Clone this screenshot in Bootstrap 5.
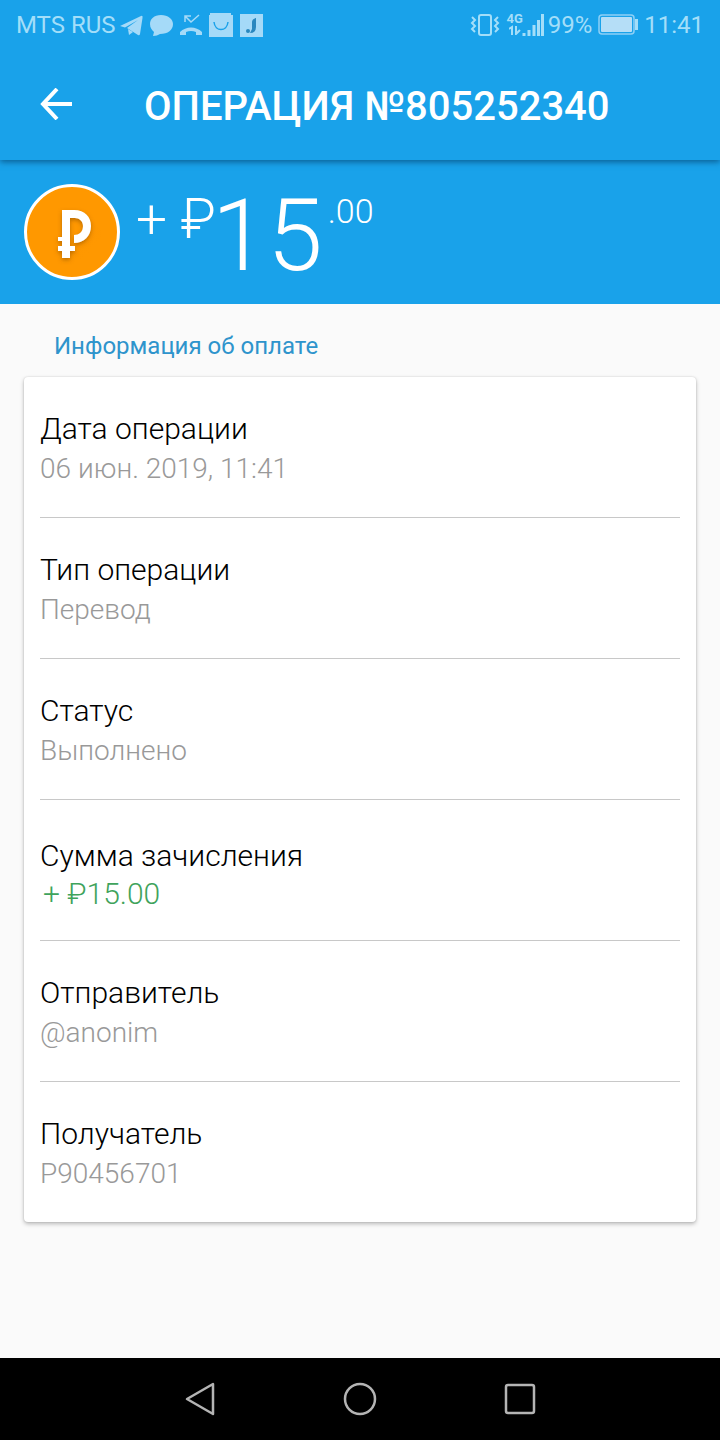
<!DOCTYPE html>
<html lang="ru">
<head>
<meta charset="utf-8">
<meta name="viewport" content="width=device-width, initial-scale=1">
<title>Операция №805252340</title>
<link href="https://cdn.jsdelivr.net/npm/bootstrap@5.3.0/dist/css/bootstrap.min.css" rel="stylesheet">
<style>
  body { font-family: Roboto, "Noto Sans", sans-serif; background: #fafafa; color: #000; }
  svg { display: block; flex: none; }
  .sky { background: #19a2ea; color: #fff; }
  .topzone { box-shadow: 0 2px 6px rgba(0, 50, 90, .6); z-index: 1; }
  .status { height: 48px; padding: 2px 16px 0; font-size: 24px; line-height: 46px; color: #a3def9; }
  .network { font-size: 13px; line-height: 13px; font-weight: 700; height: 26px; width: 14px; }
  .battery { margin: 0 6px; }
  .appbar { height: 112px; padding: 0 24px; }
  .appbar h1 { font-size: 40px; line-height: 48px; font-weight: 500; padding-top: 5px; }
  .back { width: 64px; height: 64px; margin-right: 56px; }
  .amount { height: 144px; padding: 0 24px; font-weight: 300; }
  .sign { font-size: 55px; line-height: 64px; padding-top: 27px; }
  .whole { font-size: 100px; line-height: 112px; padding-top: 20px; margin: 0 5px 0 -4px; }
  .cents { font-size: 34px; line-height: 40px; padding-top: 31px; }
  .section-title { font-size: 24px; line-height: 32px; font-weight: 400; color: #2e94cc; margin: 0; padding: 26px 30px 15px; }
  .sheet { border: 0; border-radius: 4px; box-shadow: 0 2px 4px rgba(0, 0, 0, .26), 0 0 2px rgba(0, 0, 0, .14); padding: 0 16px; }
  .entry { height: 141px; padding-top: 32px; border-bottom: 1px solid #c8c8c8; }
  .entry:last-child { border-bottom: 0; height: 140px; }
  .entry dt { font-size: 30px; line-height: 40px; font-weight: 300; }
  .entry dd { font-size: 28px; line-height: 40px; font-weight: 300; color: #999; margin: 0; }
  .entry-sum { padding-top: 36px; }
  .entry-sum dd { font-size: 30px; line-height: 36px; color: #3fa35c; padding-left: 3px; }
  .softkeys { height: 82px; background: #000; gap: 112px; }
  .softkeys .btn { width: 48px; height: 48px; }
</style>
</head>
<body class="d-flex flex-column min-vh-100">
<div class="topzone sky position-relative">
<div class="status d-flex justify-content-between align-items-center">
  <div class="d-flex align-items-center">
    <span>MTS RUS</span>
    <svg class="ms-1" width="144" height="28" viewBox="0 0 144 28" fill="#a5daf8" aria-hidden="true">
      <path d="M0 15L21 5Q23 4 22.500 7L20 23Q19.500 25 18 24L7 17L18 9L5 16.500Z"/>
      <path d="M8 18L13 21L9 24Z"/>
      <path d="M41 4C34 4 30 8 30 13C30 17 32 19 34 21L33 25C36 25 38 24 40 23C48 23 53 19 53 13C53 8 48 4 41 4Z"/>
      <path d="M65 11V5H71M65 5L71 11L79 4" fill="none" stroke="#a5daf8" stroke-width="1.500"/>
      <path d="M60 21C66 15 76 15 82 21V24H76V21Q71 19 66 21V24H60Z"/>
      <path d="M90 2H111V4H113V26H89V4H90Z"/>
      <path d="M94 11C95 21 107 21 108 11" fill="none" stroke="#19a2ea" stroke-width="1.500"/>
      <path d="M120 3H143V26H120Z"/>
      <path d="M136 7V16Q136 22 130 22L132 18V11Q132 8 136 7Z" fill="#2987bf"/>
      <circle cx="128" cy="20" r="2" fill="#2987bf"/>
    </svg>
  </div>
  <div class="d-flex align-items-center">
    <svg width="30" height="26" viewBox="0 0 30 26" fill="none" stroke="#a3def9" aria-hidden="true">
      <rect x="9" y="3" width="12" height="20" rx="2" stroke-width="2"/>
      <path d="M2 5L5 8L2 11L5 14L2 17L5 20M28 5L25 8L28 11L25 14L28 17L25 20" stroke-width="2"/>
    </svg>
    <span class="network d-flex flex-column align-items-center ms-2">
      <span>4G</span>
      <svg width="12" height="10" viewBox="0 0 12 10" fill="none" stroke="#a3def9" stroke-width="2" aria-hidden="true"><path d="M0 4L3 2V10M7 1V9L11 5"/></svg>
    </span>
    <svg width="22" height="26" viewBox="0 0 22 26" fill="none" stroke="#a3def9" stroke-width="3" aria-hidden="true"><path d="M2 24V21M7 24V18M12 24V13M16.500 24V8M20.500 24V2"/></svg>
    <span class="ms-1">99%</span>
    <svg class="battery" width="40" height="22" viewBox="0 0 40 22" aria-hidden="true">
      <rect x="1" y="1" width="35" height="19" rx="3" fill="none" stroke="#8dd0f6" stroke-width="1.500"/>
      <rect x="3" y="3" width="31" height="15" rx="1" fill="#b5def7"/>
      <path d="M38.500 5V16" stroke="#a3def9" stroke-width="3"/>
    </svg>
    <span>11:41</span>
  </div>
</div>

<header class="appbar d-flex align-items-center">
  <button class="back btn border-0 p-0 text-white d-flex align-items-center justify-content-center" type="button" aria-label="Назад">
    <svg width="32" height="32" viewBox="0 0 32 32" fill="none" stroke="#fff" stroke-width="4"><path d="M17 1L3 16L17 31M2 16H32"/></svg>
  </button>
  <h1 class="m-0 text-nowrap">ОПЕРАЦИЯ №805252340</h1>
</header>
</div>

<section class="sky amount d-flex align-items-start">
  <svg class="mt-4" width="96" height="96" viewBox="0 0 96 96" aria-hidden="true">
    <defs>
      <linearGradient id="shade" x1="0" y1="0" x2="1" y2="1"><stop offset="0" stop-color="#e67f00" stop-opacity=".8"/><stop offset=".7" stop-color="#ff9800" stop-opacity="0"/></linearGradient>
      <filter id="drop" x="-30%" y="-30%" width="160%" height="160%"><feDropShadow dx="0" dy="2" stdDeviation="2" flood-color="#7a4200" flood-opacity=".5"/></filter>
    </defs>
    <circle cx="48" cy="48" r="46.500" fill="#ff9800" stroke="#fff" stroke-width="3"/>
    <path d="M64 33L84 53L66 79L42 74L54 54Z" fill="url(#shade)" opacity=".5"/>
    <g filter="url(#drop)" fill="#fff">
      <path d="M38 26H50C61 26 67 33 67 42C67 52 60 59 50 59V51C55 51 59 48 59 42C59 37 55 34 51 34H46V62H51V67H46V74H38V67H34V62H38V57H34V53H38Z"/>
    </g>
  </svg>
  <span class="sign ps-3">+ ₽</span><span class="whole">15</span><span class="cents">.00</span>
</section>

<main class="flex-grow-1 px-4">
  <h2 class="section-title">Информация об оплате</h2>
  <dl class="sheet card mb-4">
    <div class="entry"><dt>Дата операции</dt><dd>06 июн. 2019, 11:41</dd></div>
    <div class="entry"><dt>Тип операции</dt><dd>Перевод</dd></div>
    <div class="entry"><dt>Статус</dt><dd>Выполнено</dd></div>
    <div class="entry entry-sum"><dt>Сумма зачисления</dt><dd>+ ₽15.00</dd></div>
    <div class="entry"><dt>Отправитель</dt><dd>@anonim</dd></div>
    <div class="entry"><dt>Получатель</dt><dd>P90456701</dd></div>
  </dl>
</main>

<nav class="softkeys d-flex justify-content-center align-items-center" aria-label="Системная навигация">
  <button class="btn border-0 p-0 d-flex align-items-center justify-content-center" type="button" aria-label="Назад">
    <svg width="36" height="36" viewBox="0 0 36 36" fill="none" stroke="#b4b4b4" stroke-width="2.500" stroke-linejoin="round"><path d="M31 3V33L5 18Z"/></svg>
  </button>
  <button class="btn border-0 p-0 d-flex align-items-center justify-content-center" type="button" aria-label="Домой">
    <svg width="36" height="36" viewBox="0 0 36 36" fill="none" stroke="#b4b4b4" stroke-width="2.500"><circle cx="18" cy="18" r="15"/></svg>
  </button>
  <button class="btn border-0 p-0 d-flex align-items-center justify-content-center" type="button" aria-label="Недавние">
    <svg width="36" height="36" viewBox="0 0 36 36" fill="none" stroke="#b4b4b4" stroke-width="2.500"><rect x="4" y="4" width="28" height="28" rx="2"/></svg>
  </button>
</nav>
<script src="https://cdn.jsdelivr.net/npm/bootstrap@5.3.0/dist/js/bootstrap.bundle.min.js"></script>
</body>
</html>
